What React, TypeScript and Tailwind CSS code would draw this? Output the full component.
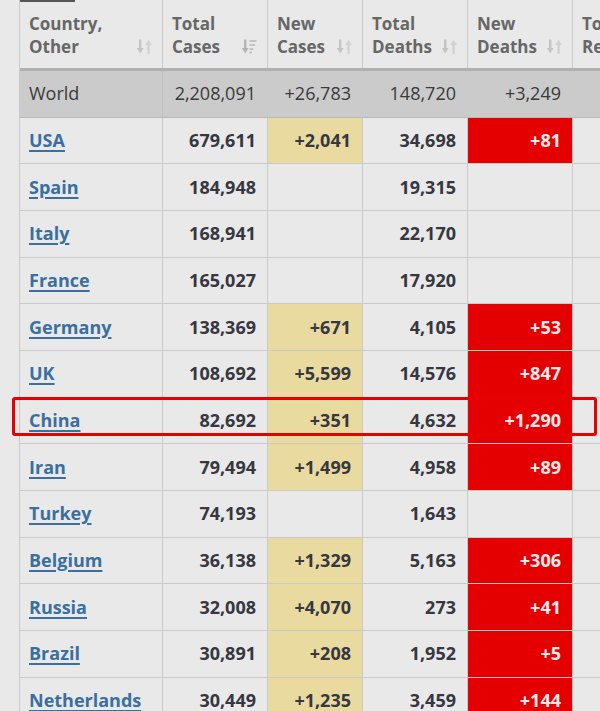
import React from "react";

type Row = {
  country: string;
  total: string;
  newCases: string;
  deaths: string;
  newDeaths: string;
};

const rows: Row[] = [
  { country: "USA", total: "679,611", newCases: "+2,041", deaths: "34,698", newDeaths: "+81" },
  { country: "Spain", total: "184,948", newCases: "", deaths: "19,315", newDeaths: "" },
  { country: "Italy", total: "168,941", newCases: "", deaths: "22,170", newDeaths: "" },
  { country: "France", total: "165,027", newCases: "", deaths: "17,920", newDeaths: "" },
  { country: "Germany", total: "138,369", newCases: "+671", deaths: "4,105", newDeaths: "+53" },
  { country: "UK", total: "108,692", newCases: "+5,599", deaths: "14,576", newDeaths: "+847" },
  { country: "China", total: "82,692", newCases: "+351", deaths: "4,632", newDeaths: "+1,290" },
  { country: "Iran", total: "79,494", newCases: "+1,499", deaths: "4,958", newDeaths: "+89" },
  { country: "Turkey", total: "74,193", newCases: "", deaths: "1,643", newDeaths: "" },
  { country: "Belgium", total: "36,138", newCases: "+1,329", deaths: "5,163", newDeaths: "+306" },
  { country: "Russia", total: "32,008", newCases: "+4,070", deaths: "273", newDeaths: "+41" },
  { country: "Brazil", total: "30,891", newCases: "+208", deaths: "1,952", newDeaths: "+5" },
  { country: "Netherlands", total: "30,449", newCases: "+1,235", deaths: "3,459", newDeaths: "+144" },
];

function SortIcon() {
  return (
    <svg width="15" height="17" viewBox="0 0 15 16" className="shrink-0 mb-[3px]">
      <rect x="2" y="1" width="2.4" height="10" fill="#c4c4c4" />
      <polygon points="-0.2,9.5 6.6,9.5 3.2,15" fill="#c4c4c4" />
      <polygon points="8.2,6.5 15,6.5 11.6,1" fill="#d2d2d2" />
      <rect x="10.4" y="5" width="2.4" height="10.5" fill="#d2d2d2" />
    </svg>
  );
}

function SortDescIcon() {
  return (
    <svg width="15" height="17" viewBox="0 0 15 16" className="shrink-0 mb-[3px]">
      <rect x="2" y="1" width="2.4" height="10" fill="#b4b4b4" />
      <polygon points="-0.2,9.5 6.6,9.5 3.2,15" fill="#b4b4b4" />
      <rect x="7.5" y="1.5" width="7" height="2" fill="#c4c4c4" />
      <rect x="7.5" y="5.5" width="5.5" height="2" fill="#c4c4c4" />
      <rect x="7.5" y="9.5" width="4" height="2" fill="#c4c4c4" />
      <rect x="7.5" y="13" width="2.5" height="2" fill="#c4c4c4" />
    </svg>
  );
}

function HeadCell({
  width,
  top,
  bottom,
  desc,
  noIcon,
}: {
  width: string;
  top: string;
  bottom: string;
  desc?: boolean;
  noIcon?: boolean;
}) {
  return (
    <div
      className={`${width} shrink-0 h-full border-r border-[#cacaca] flex items-end justify-between pl-[9px] pr-[10px] pb-[10px]`}
    >
      <div className="text-[17px] leading-[23px] font-bold text-[#676767] whitespace-nowrap">
        <div>{top}</div>
        <div>{bottom}</div>
      </div>
      {!noIcon && (desc ? <SortDescIcon /> : <SortIcon />)}
    </div>
  );
}

const cellBase =
  "shrink-0 h-full border-r border-[#cacaca] flex items-center justify-end pr-[11px] text-[18px]";

export default function App() {
  return (
    <div
      className="relative w-[600px] h-[711px] overflow-hidden bg-[#e9e9e9]"
      style={{ fontFamily: '"Open Sans", "Noto Sans", sans-serif' }}
    >
      <div className="absolute top-0 left-[20px] w-[55px] h-[2px] bg-[#555]" />

      <div className="ml-[19px] w-[700px] border-l border-[#cacaca]">
        {/* header */}
        <div className="flex h-[71px] border-b-[3px] border-[#b0b0b0] bg-[#e9e9e9]">
          <HeadCell width="w-[143px]" top="Country," bottom="Other" />
          <HeadCell width="w-[105px]" top="Total" bottom="Cases" desc />
          <HeadCell width="w-[95px]" top="New" bottom="Cases" />
          <HeadCell width="w-[105px]" top="Total" bottom="Deaths" />
          <HeadCell width="w-[105px]" top="New" bottom="Deaths" />
          <HeadCell width="w-[140px]" top="Total" bottom="Recovered" noIcon />
        </div>

        {/* world */}
        <div className="flex h-[46.67px] border-b border-[#b8b8b8] bg-[#cbcbcb] text-[#3a3a3a]">
          <div className="w-[143px] shrink-0 h-full border-r border-[#bdbdbd] flex items-center pl-[9px] text-[18px]">
            World
          </div>
          <div className={`${cellBase} w-[105px] border-[#bdbdbd]`}>2,208,091</div>
          <div className={`${cellBase} w-[95px] border-[#bdbdbd]`}>+26,783</div>
          <div className={`${cellBase} w-[105px] border-[#bdbdbd]`}>148,720</div>
          <div className={`${cellBase} w-[105px] border-[#bdbdbd]`}>+3,249</div>
          <div className={`${cellBase} w-[140px] border-[#bdbdbd]`}></div>
        </div>

        {rows.map((r) => (
          <div
            key={r.country}
            className="flex h-[46.67px] border-b border-[#cacaca] bg-[#e9e9e9] font-bold text-[#363740]"
          >
            <div className="w-[143px] shrink-0 h-full border-r border-[#cacaca] flex items-center pl-[9px] text-[18px]">
              <a className="text-[#3a6f9f] underline decoration-[1.5px] underline-offset-[3px]">
                {r.country}
              </a>
            </div>
            <div className={`${cellBase} w-[105px]`}>{r.total}</div>
            <div className={`${cellBase} w-[95px] ${r.newCases ? "bg-[#e9da9f]" : ""}`}>
              {r.newCases}
            </div>
            <div className={`${cellBase} w-[105px]`}>{r.deaths}</div>
            <div
              className={`${cellBase} w-[105px] ${r.newDeaths ? "bg-[#e40000] text-[#fbeaea]" : ""}`}
            >
              {r.newDeaths}
            </div>
            <div className={`${cellBase} w-[140px]`}></div>
          </div>
        ))}
      </div>

      {/* highlight box */}
      <div className="absolute left-[12px] top-[397px] w-[585px] h-[39px] border-[3px] border-[#e60000] rounded-[3px]" />
    </div>
  );
}
